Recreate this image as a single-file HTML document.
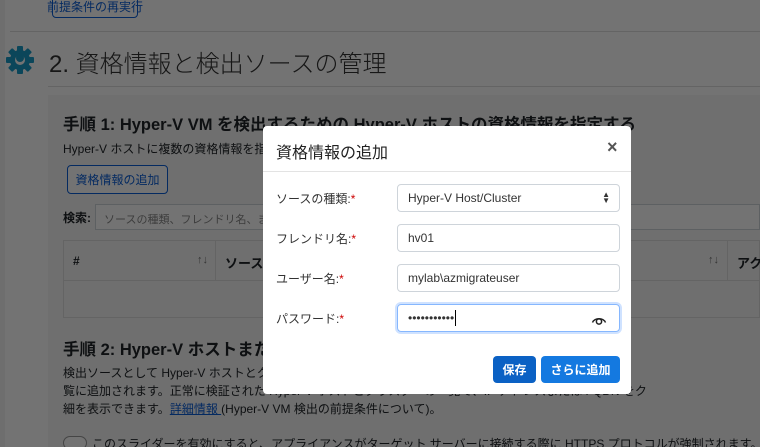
<!DOCTYPE html>
<html style="overflow:hidden"><head><meta charset="utf-8"><style>
*{box-sizing:border-box;margin:0;padding:0}
html,body{width:760px;height:447px;overflow:hidden}
body{position:relative;background:#fff;font-family:"Liberation Sans","Noto Sans CJK JP",sans-serif;color:#212529}
.wrap{position:absolute;left:0;top:0;width:760px;height:447px;overflow:hidden}
.a{position:absolute;white-space:nowrap}
.btn-o{border:1px solid #0b5ed7;color:#0b5ed7;border-radius:4px;font-size:12px;display:flex;align-items:center;justify-content:center;background:#fff}
.ov{position:absolute;left:0;top:0;width:760px;height:447px;background:rgba(0,0,0,0.55)}
.m{position:absolute;left:263px;top:126px;width:368px;height:268px;background:#fff;border-radius:4px}
.lb{position:absolute;left:13px;font-size:12px;color:#333}
.lb i{color:#c00;font-style:normal}
.in{position:absolute;left:134px;width:223px;height:28px;border:1px solid #ced4da;border-radius:4px;font-size:12px;padding-left:10px;display:flex;align-items:center;color:#333}
</style></head><body><div class="wrap">
<div class="a" style="left:0;top:0;width:5px;height:447px;background:#f3f3f3"></div>
<div class="a btn-o" style="left:52px;top:-6px;width:86px;height:24px">前提条件の再実行</div>
<div class="a" style="left:10px;top:31px;width:750px;height:1px;background:#ddd"></div>
<svg class="a" style="left:5px;top:45px" width="30" height="30" viewBox="0 0 30 30"><g fill="#1a9bc7"><circle cx="15" cy="15" r="10"/><g id="t"><rect x="12" y="1" width="6" height="6" rx="1"/><rect x="12" y="23" width="6" height="6" rx="1"/><rect x="1" y="12" width="6" height="6" rx="1"/><rect x="23" y="12" width="6" height="6" rx="1"/></g><use href="#t" transform="rotate(45 15 15)"/></g><circle cx="15" cy="15" r="5" fill="#fff"/><circle cx="15" cy="13" r="4" fill="#1a9bc7"/></svg>
<div class="a" style="left:49px;top:44px;font-size:24px;color:#333;font-weight:300">2. 資格情報と検出ソースの管理</div>
<div class="a" style="left:48px;top:86px;width:712px;height:1px;background:#ddd"></div>
<div class="a" style="left:48px;top:95px;width:712px;height:352px;background:#f5f5f5"></div>
<div class="a" style="left:63px;top:111px;font-size:16.5px;font-weight:bold">手順 1: Hyper-V VM を検出するための Hyper-V ホストの資格情報を指定する</div>
<div class="a" style="left:63px;top:140px;font-size:12px">Hyper-V ホストに複数の資格情報を指定します (Hyper-V VM 検出に必要なアクセス許可について)。</div>
<div class="a btn-o" style="left:67px;top:165px;width:101px;height:29px">資格情報の追加</div>
<div class="a" style="left:63px;top:209px;font-size:12px;font-weight:bold">検索:</div>
<div class="a" style="left:95px;top:204px;width:665px;height:26px;border:1px solid #ced4da;background:#fff;font-size:11px;color:#888;padding:6px 8px">ソースの種類、フレンドリ名、またはユーザー名で検索</div>
<div class="a" style="left:63px;top:240px;width:697px;height:78px;border:1px solid #ddd;background:#f5f5f5"></div>
<div class="a" style="left:63px;top:280px;width:697px;height:1px;background:#ddd"></div>
<div class="a" style="left:215px;top:240px;width:1px;height:40px;background:#ddd"></div>
<div class="a" style="left:727px;top:240px;width:1px;height:40px;background:#ddd"></div>
<div class="a" style="left:73px;top:254px;font-size:12px;font-weight:bold">#</div>
<div class="a" style="left:197px;top:254px;font-size:11px;color:#777">↑↓</div>
<div class="a" style="left:225px;top:253px;font-size:13px;font-weight:bold">ソースの種類</div>
<div class="a" style="left:708px;top:254px;font-size:11px;color:#777">↑↓</div>
<div class="a" style="left:737px;top:253px;font-size:13px;font-weight:bold">アクション</div>
<div class="a" style="left:63px;top:336px;font-size:16.5px;font-weight:bold">手順 2: Hyper-V ホストまたはクラスターの情報を指定する</div>
<div class="a" style="left:63px;top:364px;font-size:12px;line-height:18.2px">検出ソースとして Hyper-V ホストとクラスターを追加します。クラスターを追加すると、クラスターが<br>覧に追加されます。正常に検証された Hyper-V ホストとクラスターの一覧で、IP アドレスまたは FQDN をク<br>細を表示できます。<span style="color:#0b5ed7;text-decoration:underline">詳細情報 </span>(Hyper-V VM 検出の前提条件について)。</div>
<div class="a" style="left:63px;top:436px;width:24px;height:14px;border-radius:7px;border:1px solid #999;background:#fff"></div>
<div class="a" style="left:92px;top:435px;font-size:12px">このスライダーを有効にすると、アプライアンスがターゲット サーバーに接続する際に HTTPS プロトコルが強制されます。次</div>
<div class="ov"></div>
<div class="m">
<div class="a" style="left:13px;top:13px;font-size:16px;color:#222">資格情報の追加</div>
<div class="a" style="left:344px;top:11px;font-size:18px;color:#555;font-weight:bold">×</div>
<div class="a" style="left:0;top:45px;width:368px;height:1px;background:#e3e3e3"></div>
<div class="lb" style="top:64px">ソースの種類:<i>*</i></div>
<div class="in" style="top:58px">Hyper-V Host/Cluster<span style="position:absolute;right:9px;font-size:8px;line-height:6px;color:#333">▲<br>▼</span></div>
<div class="lb" style="top:104px">フレンドリ名:<i>*</i></div>
<div class="in" style="top:98px">hv01</div>
<div class="lb" style="top:144px">ユーザー名:<i>*</i></div>
<div class="in" style="top:138px">mylab\azmigrateuser</div>
<div class="lb" style="top:184px">パスワード:<i>*</i></div>
<div class="in" style="top:178px;border-color:#86b7fe;box-shadow:0 0 0 2px rgba(13,110,253,.2)">•••••••••••<span style="display:inline-block;width:1px;height:16px;background:#000;margin-left:1px"></span>
<svg style="position:absolute;right:12px;top:8px" width="16" height="12" viewBox="0 0 16 12"><path d="M1.5 9.5C3.5 4.5 12.5 4.5 14.5 9.5" fill="none" stroke="#222" stroke-width="1.5"/><circle cx="8" cy="8.5" r="2.6" fill="none" stroke="#222" stroke-width="1.5"/></svg></div>
<div class="a" style="left:230px;top:230px;width:43px;height:27px;background:#0b61c4;color:#fff;font-size:12px;font-weight:bold;border-radius:4px;display:flex;align-items:center;justify-content:center">保存</div>
<div class="a" style="left:278px;top:230px;width:79px;height:27px;background:#1479e0;color:#fff;font-size:12px;font-weight:bold;border-radius:4px;display:flex;align-items:center;justify-content:center">さらに追加</div>
</div>
</div></body></html>
